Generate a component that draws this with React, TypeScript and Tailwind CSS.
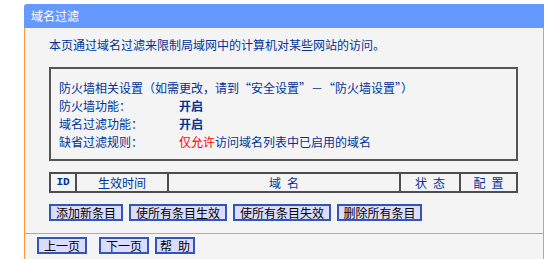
import React from "react";

const font = { fontFamily: '"Noto Sans CJK SC", "Liberation Sans", sans-serif' };

function Sp() {
  return <span className="inline-block w-[6px]" />;
}

function Btn({ children, w }: { children: React.ReactNode; w: string }) {
  return (
    <div
      className={`${w} h-[17px] border-2 border-[#3355bb] bg-[#dcdcff] text-black text-[12px] leading-[13px] flex items-center justify-center whitespace-pre`}
    >
      {children}
    </div>
  );
}

export default function App() {
  return (
    <div className="w-[550px] h-[259px] bg-white overflow-hidden flex flex-col pt-[4px]" style={font}>
      <div className="ml-[24px] w-[520px] flex-1 flex flex-col">
        <div className="h-[24px] bg-[#6699ff] rounded-tl-[3px] text-white text-[12px] leading-[24px] pl-[7px]">
          域名过滤
        </div>
        <div className="flex-1 bg-[#f4f4f4] border-l border-r border-[#ff9933] flex flex-col">
          <div className="pl-[24px] pt-[8px] text-[12px] leading-[18px] text-[#003399]">
            本页通过域名过滤来限制局域网中的计算机对某些网站的访问。
          </div>
          <div className="ml-[24px] mt-[13px] w-[469px] border-2 border-[#555555] pl-[8px] pt-[10px] pb-[8px] text-[12px] leading-[18px] text-[#003399]">
            <div>防火墙相关设置（如需更改，请到“安全设置”－“防火墙设置”）</div>
            <div className="flex">
              <div className="w-[120px]">防火墙功能：</div>
              <div className="font-bold">开启</div>
            </div>
            <div className="flex">
              <div className="w-[120px]">域名过滤功能：</div>
              <div className="font-bold">开启</div>
            </div>
            <div className="flex">
              <div className="w-[120px]">缺省过滤规则：</div>
              <div>
                <span className="text-[#ff0000]">仅允许</span>访问域名列表中已启用的域名
              </div>
            </div>
          </div>
          <div className="ml-[24px] mt-[11px] w-[469px] h-[21px] border-2 border-[#4d4d4d] flex text-[12px] leading-[17px] text-[#003399]">
            <div className="w-[24px] flex items-center justify-center text-[11px] font-bold" style={{ fontFamily: '"Liberation Mono", monospace' }}>ID</div>
            <div className="w-[92px] border-l-2 border-[#4d4d4d] flex items-center justify-center">生效时间</div>
            <div className="w-[232px] border-l-2 border-[#4d4d4d] flex items-center justify-center">域<Sp />名</div>
            <div className="w-[60px] border-l-2 border-[#4d4d4d] flex items-center justify-center">状<Sp />态</div>
            <div className="flex-1 border-l-2 border-[#4d4d4d] flex items-center justify-center">配<Sp />置</div>
          </div>
          <div className="ml-[24px] mt-[11px] flex gap-[6px]">
            <Btn w="w-[74px]">添加新条目</Btn>
            <Btn w="w-[98px]">使所有条目生效</Btn>
            <Btn w="w-[98px]">使所有条目失效</Btn>
            <Btn w="w-[85px]">删除所有条目</Btn>
          </div>
          <div className="mt-[12px] h-px bg-[#ff9933]" />
          <div className="ml-[12px] mt-[3px] flex">
            <Btn w="w-[50px]">上一页</Btn>
            <div className="ml-[12px]">
              <Btn w="w-[50px]">下一页</Btn>
            </div>
            <div className="ml-[6px]">
              <Btn w="w-[40px]">帮<Sp />助</Btn>
            </div>
          </div>
        </div>
      </div>
    </div>
  );
}
